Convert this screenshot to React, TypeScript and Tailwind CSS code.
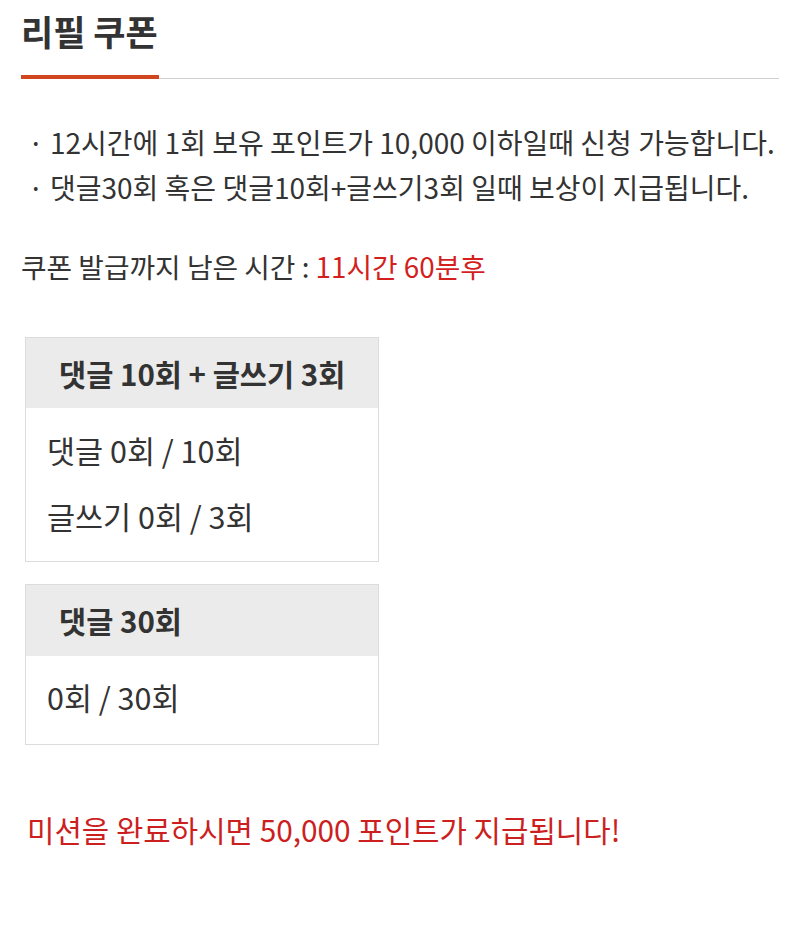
export default function App() {
  return (
    <div
      className="w-[800px] h-[925px] bg-white text-[#333333]"
      style={{ fontFamily: '"Noto Sans CJK KR", "Noto Sans", sans-serif' }}
    >
      {/* Title */}
      <div className="px-[21px] pt-[5px]">
        <h2 className="text-[35px] font-bold leading-[52px]">리필 쿠폰</h2>
        <div className="mt-[18px] flex items-end">
          <div className="w-[138px] h-[4px] bg-[#d2461f]" />
          <div className="flex-1 h-px bg-[#cfcfcf]" />
        </div>
      </div>

      {/* Notices */}
      <ul className="mt-[41px] pl-[28px] text-[28px] leading-[45px]">
        <li>· 12시간에 1회 보유 포인트가 10,000 이하일때 신청 가능합니다.</li>
        <li>· 댓글30회 혹은 댓글10회+글쓰기3회 일때 보상이 지급됩니다.</li>
      </ul>

      <p className="mt-[36px] pl-[21px] text-[27.8px] leading-[40px]">
        쿠폰 발급까지 남은 시간 : <span className="text-[#d41f1f]">11시간 60분후</span>
      </p>

      {/* Mission boxes */}
      <div className="mt-[51px] pl-[25px] flex flex-col gap-[22px]">
        <div className="w-[354px] border border-[#dcdcdc]">
          <div className="h-[70px] bg-[#ebebeb] flex items-center pl-[33px] text-[29.5px] font-bold">
            댓글 10회 + 글쓰기 3회
          </div>
          <div className="pl-[21px] pt-[20px] pb-[23px] text-[30.5px]">
            <p className="leading-[44px]">댓글 0회 / 10회</p>
            <p className="mt-[22px] leading-[44px]">글쓰기 0회 / 3회</p>
          </div>
        </div>

        <div className="w-[354px] border border-[#dcdcdc]">
          <div className="h-[71px] bg-[#ebebeb] flex items-center pl-[33px] text-[29.5px] font-bold">
            댓글 30회
          </div>
          <div className="pl-[21px] pt-[19px] pb-[25px] text-[30.5px] leading-[44px]">
            <p>0회 / 30회</p>
          </div>
        </div>
      </div>

      <p className="mt-[62px] pl-[27px] text-[29.8px] leading-[44px] text-[#cc1f1f]">
        미션을 완료하시면 50,000 포인트가 지급됩니다!
      </p>
    </div>
  );
}
